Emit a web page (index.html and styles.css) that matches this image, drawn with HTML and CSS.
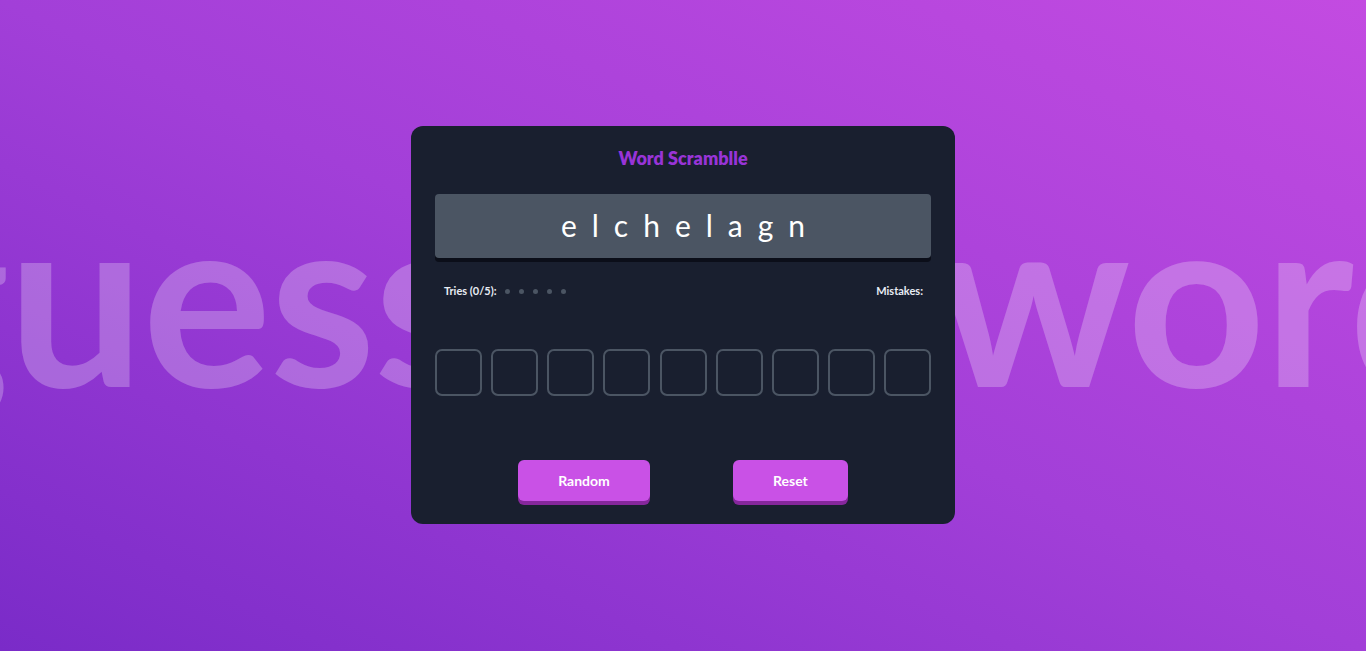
FILE: index.html
```html
<!DOCTYPE html>
<html lang="en">
<head>
<meta charset="utf-8">
<title>Word Scramblle</title>
<link rel="stylesheet" href="styles.css">
</head>
<body>
<div class="bg-word">guess the word</div>
<main class="card">
  <h1 class="title">Word Scramblle</h1>
  <div class="scrambled">elchelagn</div>
  <div class="status">
    <div class="tries">
      <span>Tries (0/5):</span>
      <span class="dots"><i></i><i></i><i></i><i></i><i></i></span>
    </div>
    <div class="mistakes">Mistakes:</div>
  </div>
  <div class="inputs">
    <input class="cell" maxlength="1">
    <input class="cell" maxlength="1">
    <input class="cell" maxlength="1">
    <input class="cell" maxlength="1">
    <input class="cell" maxlength="1">
    <input class="cell" maxlength="1">
    <input class="cell" maxlength="1">
    <input class="cell" maxlength="1">
    <input class="cell" maxlength="1">
  </div>
  <div class="actions">
    <button class="btn">Random</button>
    <button class="btn">Reset</button>
  </div>
</main>
</body>
</html>
```
FILE: styles.css
```css
* { box-sizing: border-box; }
html, body { height: 100%; }
body {
  margin: 0;
  height: 651px;
  padding-bottom: 1px;
  overflow: hidden;
  font-family: "Lato", "Inter", sans-serif;
  background: linear-gradient(to top right, #7a2bc8 0%, #a23fd8 50%, #c34be1 100%);
  display: flex;
  align-items: center;
  justify-content: center;
  position: relative;
}
.bg-word {
  position: absolute;
  left: 50%;
  top: calc(50% - 27px);
  transform: translate(-50%, -50%);
  white-space: nowrap;
  font-size: 242px;
  font-weight: 700;
  line-height: 1;
  color: rgba(255, 255, 255, 0.25);
  letter-spacing: -2px;
  padding-bottom: 10px;
  user-select: none;
}
.card {
  position: relative;
  width: 544px;
  height: 398px;
  background: #191f2f;
  border-radius: 12px;
  padding: 20px 24px 0 24px;
  display: flex;
  flex-direction: column;
}
.title {
  margin: 0;
  text-align: center;
  font-size: 18px;
  line-height: 24px;
  font-weight: 800;
  color: #9834d7;
}
.scrambled {
  margin-top: 24px;
  height: 64px;
  background: #4b5563;
  border-radius: 4px;
  box-shadow: 0 4px 0 #0b0e19;
  color: #fff;
  font-size: 30px;
  letter-spacing: 15px;
  text-indent: 15px;
  display: flex;
  align-items: center;
  justify-content: center;
  padding-bottom: 2px;
}
.status {
  margin-top: 25px;
  padding: 0 8px 0 9px;
  display: flex;
  justify-content: space-between;
  align-items: center;
  font-size: 11px;
  line-height: 16px;
  font-weight: 700;
  color: #e8ecf4;
}
.tries { display: flex; align-items: center; gap: 8px; }
.dots { display: flex; gap: 9px; }
.dots i {
  display: block;
  width: 5px;
  height: 5px;
  border-radius: 50%;
  background: #4b5563;
}
.inputs {
  margin-top: 50px;
  display: flex;
  justify-content: space-between;
}
.cell {
  width: 47px;
  height: 47px;
  border: 2px solid #4b5563;
  border-radius: 7px;
  background: transparent;
  color: #fff;
  text-align: center;
  font-size: 22px;
  outline: none;
  padding: 0;
}
.actions {
  margin-top: 64px;
  display: flex;
  justify-content: space-evenly;
}
.btn {
  height: 41px;
  padding: 0 40px;
  border: none;
  border-radius: 6px;
  background: #c951e6;
  box-shadow: 0 4px 0 #86279c;
  color: #fff;
  font-family: inherit;
  font-size: 14px;
  font-weight: 700;
  cursor: pointer;
}
```
